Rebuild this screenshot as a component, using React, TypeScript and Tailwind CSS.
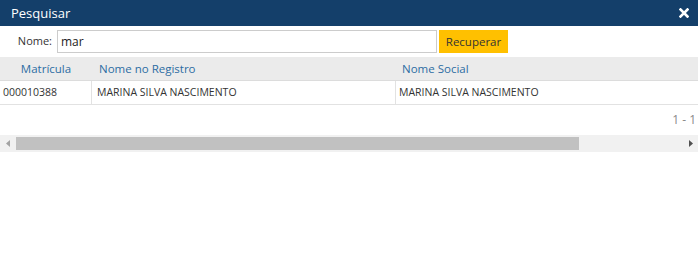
import React from "react";

export default function App() {
  const font = { fontFamily: '"Open Sans", "Noto Sans", sans-serif' };
  return (
    <div className="w-[698px] h-[273px] bg-white overflow-hidden" style={font}>
      <div className="h-[26px] bg-[#143f6a] flex items-center justify-between pl-[11px] pr-[9px]">
        <span className="text-white text-[13px] leading-none">Pesquisar</span>
        <svg width="10" height="10" viewBox="0 0 10 10">
          <path d="M1.5 1.5 L8.5 8.5 M8.5 1.5 L1.5 8.5" stroke="#fff" strokeWidth="2.6" strokeLinecap="square" />
        </svg>
      </div>
      <div className="h-[31px] flex items-center">
        <span className="w-[53px] text-right text-[11px] text-[#333] pr-[1px]">Nome:</span>
        <div className="ml-[4px] w-[380px] h-[23px] border border-[#cccccc] flex items-center pl-[3px] text-[12px] text-[#222]">
          mar
        </div>
        <button className="ml-[2px] w-[69px] h-[23px] bg-[#ffc000] text-[11.5px] text-[#333] flex items-center justify-center">
          Recuperar
        </button>
      </div>
      <div className="h-[24px] bg-[#ebebeb] border-b border-[#dcdcdc] flex items-center text-[11.5px] text-[#2d6da3]">
        <div className="w-[92px] text-center">Matrícula</div>
        <div className="w-[304px] pl-[7px]">Nome no Registro</div>
        <div className="flex-1 pl-[6px]">Nome Social</div>
      </div>
      <div className="h-[24px] border-b border-[#e2e2e2] flex text-[10.5px] text-[#333]">
        <div className="w-[92px] pl-[3px] flex items-center border-r border-[#e2e2e2]">000010388</div>
        <div className="w-[304px] pl-[5px] flex items-center border-r border-[#e2e2e2]">MARINA SILVA NASCIMENTO</div>
        <div className="flex-1 pl-[3px] flex items-center">MARINA SILVA NASCIMENTO</div>
      </div>
      <div className="h-[30px] flex items-center justify-end pr-[2px] text-[12px] text-[#8a8a8a]">1 - 1</div>
      <div className="h-[17px] bg-[#f1f1f1] flex items-center">
        <div className="w-[16px] flex justify-center">
          <svg width="4" height="7" viewBox="0 0 4 7"><path d="M4 0 L0 3.5 L4 7 Z" fill="#a3a3a3" /></svg>
        </div>
        <div className="w-[563px] h-[13px] bg-[#c1c1c1]" />
        <div className="flex-1 flex justify-end pr-[5px]">
          <svg width="4" height="7" viewBox="0 0 4 7"><path d="M0 0 L4 3.5 L0 7 Z" fill="#505050" /></svg>
        </div>
      </div>
    </div>
  );
}
